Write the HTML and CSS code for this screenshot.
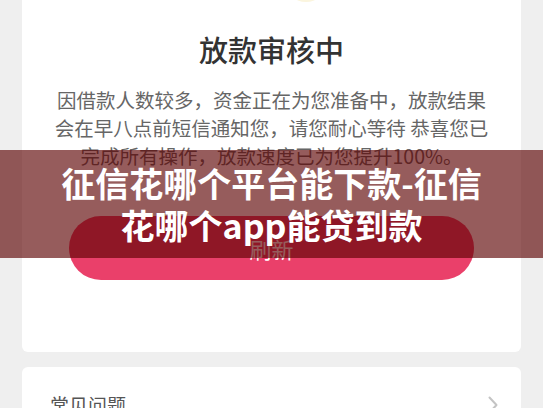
FILE: index.html
```html
<!DOCTYPE html>
<html lang="zh-CN">
<head>
    <meta charset="UTF-8">
    <meta name="viewport" content="width=device-width, initial-scale=1.0">
    <title>放款审核中</title>
    <link rel="stylesheet" href="styles.css">
</head>
<body>
    <div class="page">
        <!-- Status card -->
        <div class="card status-card">
            <div class="status-icon"></div>
            <h2 class="status-title">放款审核中</h2>
            <p class="status-text">因借款人数较多，资金正在为您准备中，放款结果会在早八点前短信通知您，请您耐心等待 恭喜您已完成所有操作，放款速度已为您提升100%。</p>
            <button class="refresh-btn">刷新</button>
        </div>

        <!-- FAQ entry -->
        <div class="card faq-card">
            <span class="faq-label">常见问题</span>
            <svg class="faq-arrow" width="10" height="18" viewBox="0 0 10 18">
                <polyline points="1.5,1.5 8.5,9 1.5,16.5" fill="none" stroke="#c4c4c4" stroke-width="2" stroke-linecap="round" stroke-linejoin="round"/>
            </svg>
        </div>
    </div>

    <!-- Title banner over the page -->
    <div class="cover-title">征信花哪个平台能下款-征信花哪个app能贷到款</div>
</body>
</html>
```

FILE: styles.css
```css
/* Basic Reset */
* {
    margin: 0;
    padding: 0;
    box-sizing: border-box;
}

html {
    overflow: hidden;
}

body {
    font-family: "Noto Sans CJK SC", "Noto Sans", sans-serif;
    background-color: #efefef;
    position: relative;
}

.page {
    padding: 0 22px;
}

/* Cards */
.card {
    background-color: #fff;
    border-radius: 0 0 6px 6px;
}

.status-card {
    padding: 0 27px 72px;
    text-align: center;
}

.status-icon {
    width: 42px;
    height: 42px;
    margin: -40px 0 0 236px;
    border-radius: 50%;
    background-color: #fbf5de;
}

.status-title {
    margin-top: 27px;
    font-size: 29px;
    line-height: 40px;
    font-weight: 500;
    color: #333;
}

.status-text {
    margin-top: 17px;
    font-size: 19.5px;
    line-height: 28px;
    color: #666;
}

.refresh-btn {
    display: block;
    width: 405px;
    height: 64px;
    margin: 46px auto 0;
    border: none;
    border-radius: 32px;
    background-color: #ea406a;
    color: #fff;
    font-family: inherit;
    font-size: 22px;
}

.faq-card {
    display: flex;
    justify-content: space-between;
    align-items: center;
    margin-top: 15px;
    padding: 24px 23px 40px 28px;
    border-radius: 6px;
}

.faq-label {
    font-size: 19px;
    line-height: 28px;
    color: #555;
}

/* Banner */
.cover-title {
    position: absolute;
    top: 150px;
    left: 0;
    right: 0;
    padding: 12px 50px;
    background-color: rgba(90, 0, 0, 0.64);
    color: #fff;
    font-size: 34px;
    line-height: 42px;
    font-weight: bold;
    text-align: center;
}
```
